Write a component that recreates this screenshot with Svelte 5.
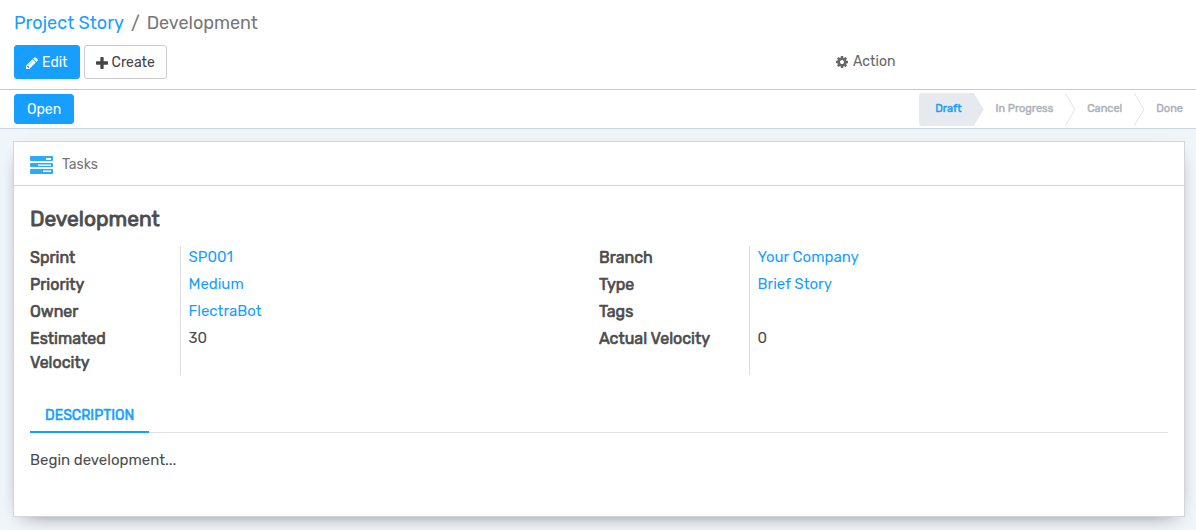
<script>
  const stages = ['Draft', 'In Progress', 'Cancel', 'Done'];
  const current = 'Draft';
  const groups = [
    [
      { label: 'Sprint', value: 'SP001', link: true },
      { label: 'Priority', value: 'Medium', link: true },
      { label: 'Owner', value: 'FlectraBot', link: true },
      { label: 'Estimated Velocity', value: '30' }
    ],
    [
      { label: 'Branch', value: 'Your Company', link: true },
      { label: 'Type', value: 'Brief Story', link: true },
      { label: 'Tags', value: '' },
      { label: 'Actual Velocity', value: '0' }
    ]
  ];
</script>

<header class="panel">
  <nav class="breadcrumb" aria-label="Breadcrumb">
    <a href="#stories">Project Story</a>
    <span>/</span>
    <span>Development</span>
  </nav>
  <div class="toolbar">
    <div class="buttons">
      <button class="btn primary">
        <svg class="icon" viewBox="128 128 1536 1536" aria-hidden="true"><path d="M491 1536l91-91-235-235-91 91v107h128v128h107zm523-928q0-22-22-22-10 0-17 7l-542 542q-7 7-7 17 0 22 22 22 10 0 17-7l542-542q7-7 7-17zm-54-192l416 416-832 832h-416v-416zm683 96q0 53-37 90l-166 166-416-416 166-165q36-38 90-38 53 0 91 38l235 234q37 39 37 91z" /></svg>
        Edit
      </button>
      <button class="btn">
        <svg class="icon" viewBox="192 128 1408 1408" aria-hidden="true"><path d="M1600 736v192q0 40-28 68t-68 28h-416v416q0 40-28 68t-68 28h-192q-40 0-68-28t-28-68v-416h-416q-40 0-68-28t-28-68v-192q0-40 28-68t68-28h416v-416q0-40 28-68t68-28h192q40 0 68 28t28 68v416h416q40 0 68 28t28 68z" /></svg>
        Create
      </button>
    </div>
    <button class="action">
      <svg class="icon" viewBox="128 128 1536 1536" aria-hidden="true"><path d="M1152 896q0-106-75-181t-181-75-181 75-75 181 75 181 181 75 181-75 75-181zm512-109v222q0 12-8 23t-20 13l-185 28q-19 54-39 91 35 50 107 138 10 12 10 25t-9 23q-27 37-99 108t-94 71q-12 0-26-9l-138-108q-44 23-91 38-16 136-29 186-7 28-36 28h-222q-14 0-24.500-8.500t-11.500-21.500l-28-184q-49-16-90-37l-141 107q-10 9-25 9-14 0-25-11-126-114-165-168-7-10-7-23 0-12 8-23 15-21 51-66.500t54-70.500q-27-50-41-99l-183-27q-13-2-21-12.500t-8-23.500v-222q0-12 8-23t19-13l186-28q14-46 39-92-40-57-107-138-10-12-10-24 0-10 9-23 26-36 98.500-107.500t94.500-71.500q13 0 26 10l138 107q44-23 91-38 16-136 29-186 7-28 36-28h222q14 0 24.500 8.500t11.500 21.500l28 184q49 16 90 37l142-107q9-9 24-9 13 0 25 10 129 119 165 170 7 8 7 22 0 12-8 23-15 21-51 66.500t-54 70.500q26 50 41 98l183 28q13 2 21 12.500t8 23.500z" /></svg>
      Action
    </button>
  </div>
</header>

<div class="statusbar">
  <button class="btn primary small">Open</button>
  <ol class="stages">
    {#each stages as stage, i}
      <li class:current={stage === current}>
        <span>{stage}</span>
        {#if i < stages.length - 1}
          <svg class="arrow" viewBox="0 0 11 33" aria-hidden="true"><path d="M0 0L10 16.500L0 33" /></svg>
        {/if}
      </li>
    {/each}
  </ol>
</div>

<main>
  <article class="sheet">
    <div class="sheet-head">
      <a class="tasks" href="#tasks">
        <svg viewBox="0 0 23 19" aria-hidden="true">
          <path fill-rule="evenodd" d="M1 0h21q1 0 1 1v3q0 1-1 1H1q-1 0-1-1V1q0-1 1-1zM16 2v2h5V2zM1 7h21q1 0 1 1v2q0 1-1 1H1q-1 0-1-1V8q0-1 1-1zM8 8.500v1.500h13V8.500zM1 13h21q1 0 1 1v3q0 1-1 1H1q-1 0-1-1v-3q0-1 1-1zM13 14.500v1.500h8v-1.500z" />
        </svg>
        Tasks
      </a>
    </div>
    <div class="sheet-body">
      <h1>Development</h1>
      <div class="groups">
        {#each groups as fields}
          <table>
            <tbody>
              {#each fields as field}
                <tr>
                  <th scope="row">{field.label}</th>
                  <td>
                    {#if field.link}<a href="#record">{field.value}</a>{:else}{field.value}{/if}
                  </td>
                </tr>
              {/each}
            </tbody>
          </table>
        {/each}
      </div>
      <div class="tabs" role="tablist">
        <button role="tab" aria-selected="true">DESCRIPTION</button>
      </div>
      <p role="tabpanel">Begin development...</p>
    </div>
  </article>
</main>

<style>
  :global(body) {
    margin: 0;
    background: #f0f5fa;
    color: #4c4c4c;
    font: 15px/24px Rubik, Roboto, "Liberation Sans", sans-serif;
  }
  a {
    color: #169fff;
    text-decoration: none;
  }
  button {
    font: inherit;
    cursor: pointer;
  }
  h1,
  th,
  .stages,
  .tabs button {
    font-weight: 400;
    -webkit-text-stroke: 0.04em currentColor;
  }
  .panel {
    background: #fff;
    border-bottom: 1px solid #c8c8cc;
    padding: 10px 14px;
  }
  .breadcrumb {
    display: flex;
    gap: 7px;
    font-size: 18px;
    line-height: 26px;
    color: #777;
    margin-bottom: 9px;
  }
  .toolbar {
    display: grid;
    grid-template-columns: 822fr 346fr;
    align-items: center;
  }
  .buttons {
    display: flex;
    gap: 4px;
  }
  .btn {
    display: flex;
    align-items: center;
    gap: 4px;
    height: 34px;
    box-sizing: border-box;
    padding: 1px 11px 0;
    border: 1px solid #ccc;
    border-radius: 3px;
    background: #fff;
    color: #444;
    font-size: 14px;
  }
  .btn.primary {
    background: #169fff;
    border-color: #169fff;
    color: #fff;
  }
  .btn.small {
    height: 30px;
    padding: 1px 12px 0;
  }
  .icon {
    width: 12px;
    height: 12px;
    fill: currentColor;
  }
  .action {
    display: flex;
    align-items: center;
    justify-self: start;
    gap: 5px;
    padding: 0;
    border: 0;
    background: none;
    color: #666;
    font-size: 14px;
  }
  .statusbar {
    display: flex;
    justify-content: space-between;
    align-items: center;
    height: 38px;
    padding-left: 14px;
    background: #fff;
    border-bottom: 1px solid #cfd6dd;
  }
  .stages {
    display: flex;
    margin: 0;
    padding: 0;
    list-style: none;
    font-size: 11px;
    line-height: 31px;
    color: #adb2b9;
  }
  .stages li {
    position: relative;
    height: 33px;
    padding: 0 13px 0 21px;
  }
  .stages li.current {
    padding: 0 13px 0 16px;
    background: #e6eaee;
    color: #169fff;
    border-radius: 3px 0 0 3px;
  }
  .arrow {
    position: absolute;
    left: 100%;
    top: 0;
    z-index: 1;
    width: 11px;
    height: 33px;
    margin-left: -1px;
    fill: #fff;
    stroke: #e0e3e7;
  }
  .current .arrow {
    fill: #e6eaee;
  }
  main {
    padding: 12px 11px 13px 13px;
  }
  .sheet {
    background: #fff;
    border: 1px solid #d5d5d8;
    box-shadow: 0 5px 20px -15px #000, 0 10px 16px -4px rgba(0, 0, 0, 0.08);
  }
  .sheet-head {
    padding: 0 16px;
    border-bottom: 1px solid #cdd4da;
  }
  .tasks {
    display: inline-flex;
    align-items: center;
    gap: 9px;
    height: 40px;
    padding-top: 3px;
    vertical-align: top;
    color: #777;
    font-size: 14px;
  }
  .tasks svg {
    width: 23px;
    height: 19px;
    fill: #2fa9fb;
  }
  .sheet-body {
    padding: 19px 16px 44px;
  }
  h1 {
    margin: 0 0 14px;
    font-size: 21px;
    line-height: 27px;
  }
  .groups {
    display: grid;
    grid-template-columns: 1fr 1fr;
    margin-bottom: 22px;
  }
  table {
    width: 100%;
    border-collapse: collapse;
    table-layout: fixed;
  }
  tr:not(:last-child) {
    height: 27px;
  }
  th,
  td {
    padding: 0 0 3px;
    text-align: left;
    vertical-align: top;
    line-height: 24px;
  }
  tr:last-child th,
  tr:last-child td {
    padding-bottom: 0;
  }
  th {
    width: 150px;
    box-sizing: border-box;
    padding-right: 34px;
    font-size: 16px;
  }
  td {
    padding-left: 8px;
    border-left: 1px solid #ddd;
    line-height: 22px;
  }
  .tabs {
    display: flex;
    border-bottom: 1px solid #dcdfe3;
  }
  .tabs button {
    padding: 7px 15px 3px;
    margin-bottom: -1px;
    border: 0;
    border-bottom: 2px solid #169fff;
    background: none;
    color: #169fff;
    font-size: 14px;
  }
  p {
    margin: 15px 0 0;
  }
</style>
